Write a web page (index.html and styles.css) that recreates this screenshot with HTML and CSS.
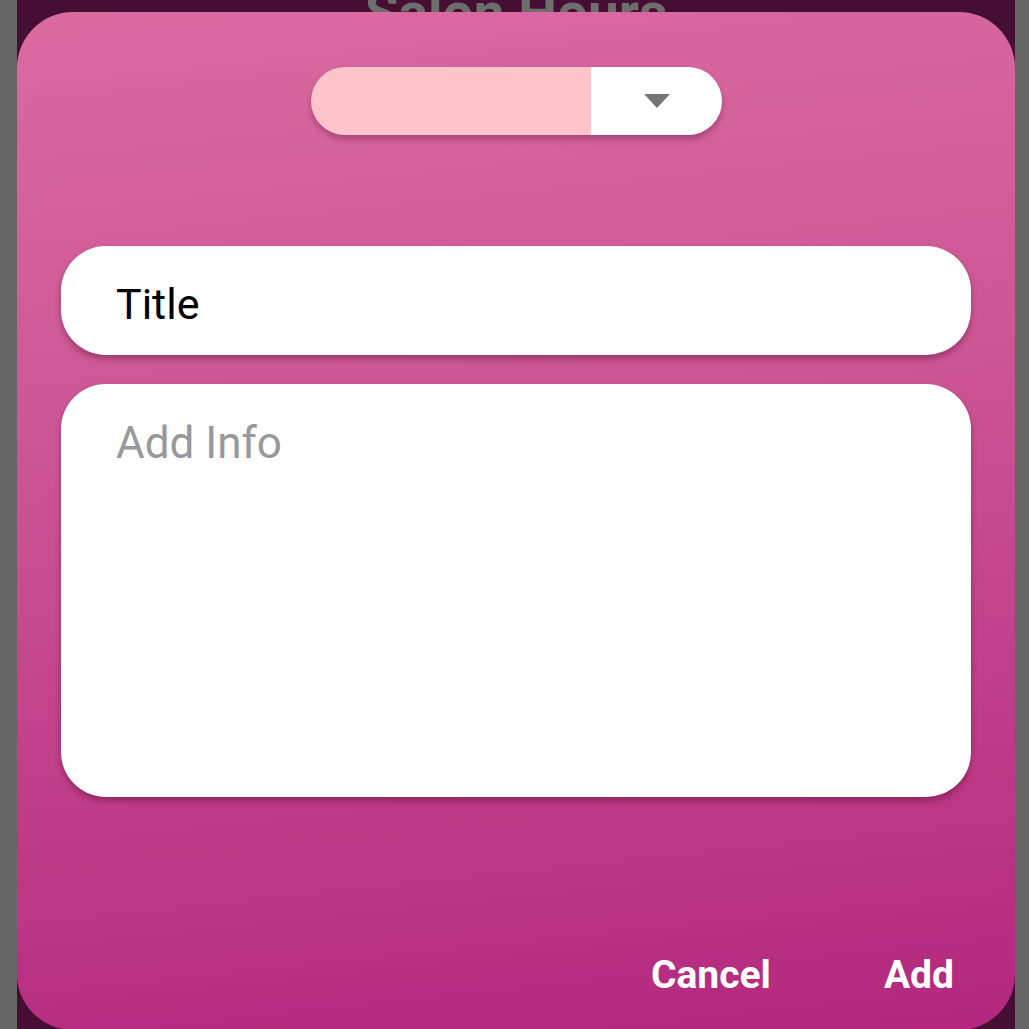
FILE: index.html
```html
<!DOCTYPE html>
<html lang="en">
<head>
<meta charset="utf-8">
<title>Add Event</title>
<link rel="stylesheet" href="styles.css">
</head>
<body>
<div class="screen">
  <h1 class="app-title">Salon Hours</h1>
  <div class="modal">
    <div class="dropdown">
      <div class="dropdown-value"></div>
      <div class="dropdown-toggle">
        <svg class="caret" width="26" height="14" viewBox="0 0 26 14"><path d="M0 0 L26 0 L13 14 Z" fill="#757575"/></svg>
      </div>
    </div>
    <div class="field field-title">Title</div>
    <div class="field field-info">Add Info</div>
    <div class="actions">
      <span class="action">Cancel</span>
      <span class="action">Add</span>
    </div>
  </div>
</div>
</body>
</html>
```

FILE: styles.css
```css
html, body {
  margin: 0;
  padding: 0;
  height: 1029px;
  overflow: hidden;
}
body {
  background: #666666;
  font-family: Roboto, "Liberation Sans", sans-serif;
}
.screen {
  position: relative;
  display: flow-root;
  margin: 0 14px 0 17px;
  height: 1029px;
  background: #460e32;
  overflow: hidden;
}
.app-title {
  margin: -14px 0 0 0;
  font-size: 55px;
  line-height: 55px;
  font-weight: 700;
  color: #6e6e6e;
  text-align: center;
}
.modal {
  position: absolute;
  left: 0;
  top: 12px;
  width: 998px;
  height: 1018px;
  box-sizing: border-box;
  padding: 55px 44px 0 44px;
  border-radius: 56px;
  background: linear-gradient(174deg, #da6ba1 0%, #cc5594 40%, #b2277d 100%);
  display: flex;
  flex-direction: column;
}
.dropdown {
  align-self: center;
  width: 411px;
  height: 68px;
  border-radius: 34px;
  overflow: hidden;
  display: flex;
  box-shadow: 0 4px 6px rgba(60, 0, 30, 0.3);
}
.dropdown-value {
  width: 280px;
  background: #ffc4cb;
}
.dropdown-toggle {
  flex: 1;
  background: #ffffff;
  display: flex;
  align-items: center;
  justify-content: center;
}
.caret {
  display: block;
  margin-left: 2px;
}
.field {
  background: #ffffff;
  border-radius: 45px;
  box-shadow: 0 4px 6px rgba(60, 0, 30, 0.35);
  box-sizing: border-box;
  padding-left: 55px;
  font-size: 43px;
}
.field-title {
  margin-top: 111px;
  height: 109px;
  display: flex;
  align-items: center;
  padding-top: 6px;
  color: #000000;
}
.field-info {
  margin-top: 29px;
  height: 413px;
  padding-top: 33px;
  font-size: 44px;
  color: #97989b;
}
.actions {
  margin-top: 155px;
  display: flex;
  justify-content: flex-end;
  gap: 113px;
  padding-right: 17px;
}
.action {
  font-size: 39px;
  line-height: 46px;
  font-weight: 700;
  color: #ffffff;
}
```
